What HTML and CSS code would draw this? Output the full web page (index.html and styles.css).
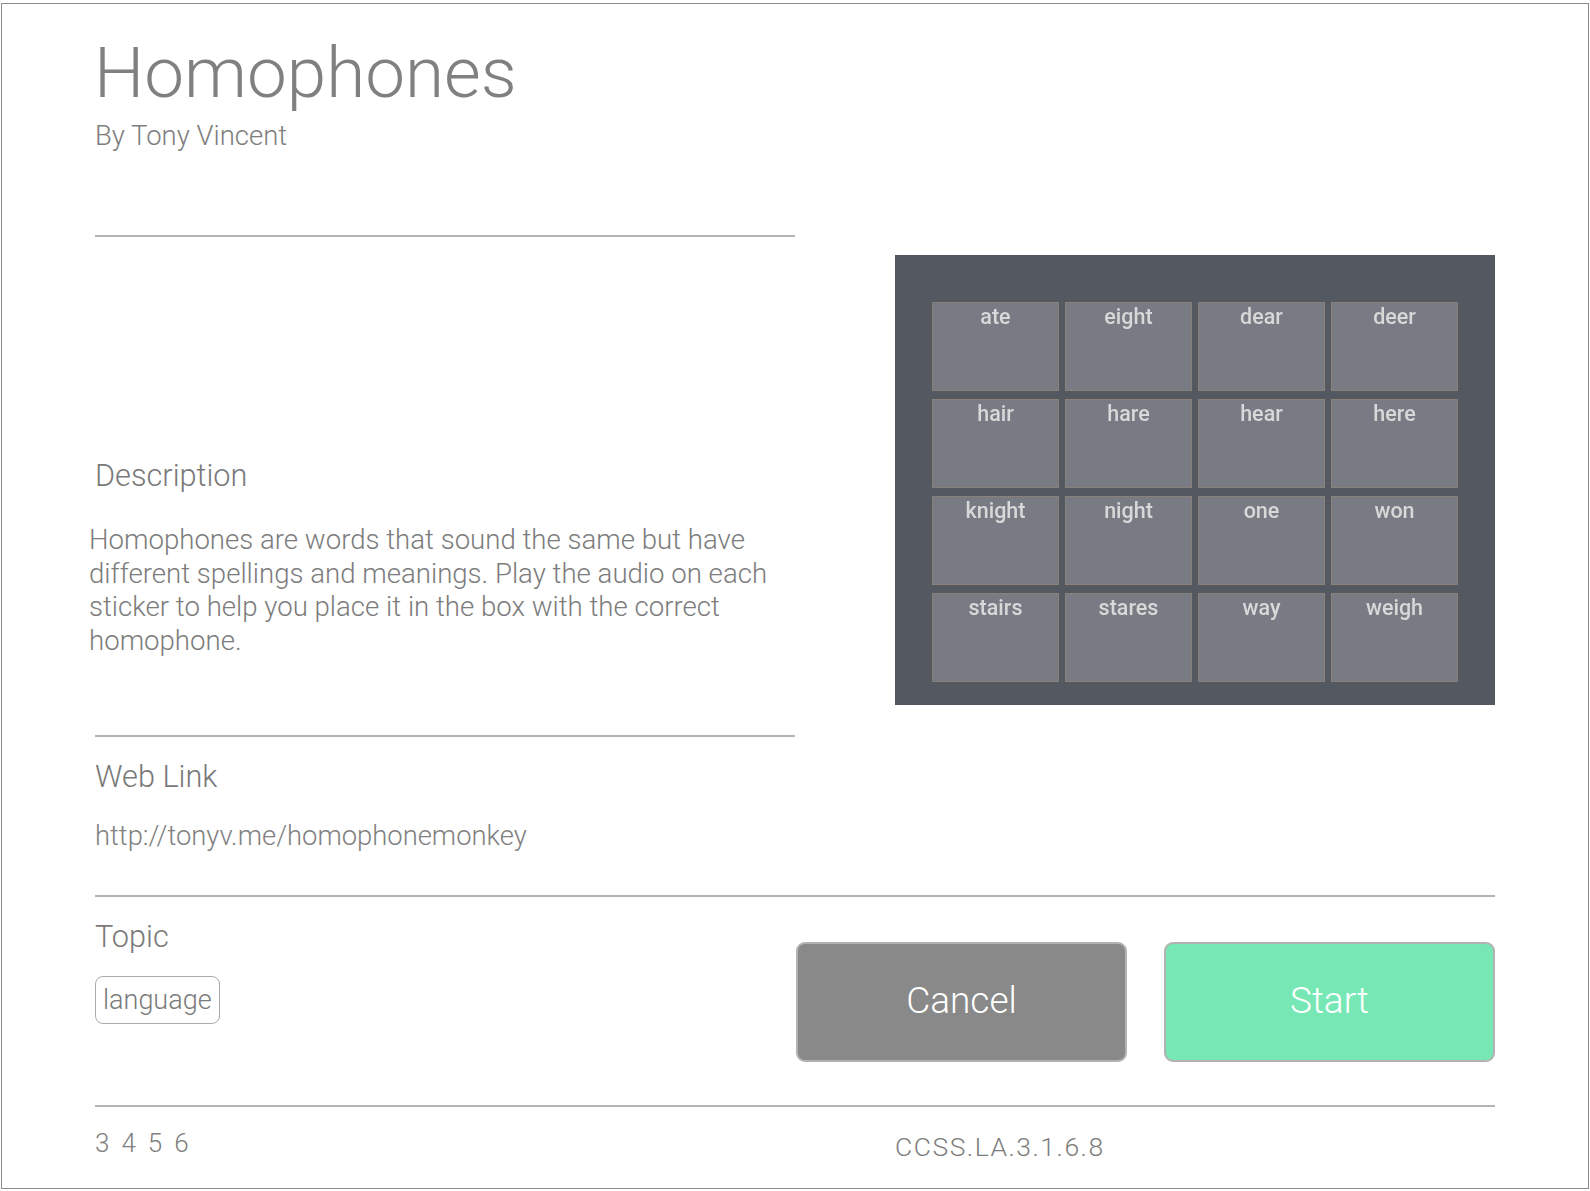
FILE: index.html
```html
<!DOCTYPE html>
<html lang="en">
<head>
<meta charset="utf-8">
<title>Homophones</title>
<link rel="stylesheet" href="styles.css">
</head>
<body>
<div class="frame">
  <header class="header">
    <h1 class="title">Homophones</h1>
    <p class="author">By Tony Vincent</p>
  </header>

  <section class="main">
    <div class="info">
      <hr class="rule">
      <h2 class="label label-desc">Description</h2>
      <p class="desc">Homophones are words that sound the same but have different spellings and meanings. Play the audio on each sticker to help you place it in the box with the correct homophone.</p>
      <hr class="rule rule-mid">
      <h2 class="label label-link">Web Link</h2>
      <p class="link">http://tonyv.me/homophonemonkey</p>
    </div>
    <div class="preview">
      <div class="board">
        <div class="tile"><span>ate</span></div>
        <div class="tile"><span>eight</span></div>
        <div class="tile"><span>dear</span></div>
        <div class="tile"><span>deer</span></div>
        <div class="tile"><span>hair</span></div>
        <div class="tile"><span>hare</span></div>
        <div class="tile"><span>hear</span></div>
        <div class="tile"><span>here</span></div>
        <div class="tile"><span>knight</span></div>
        <div class="tile"><span>night</span></div>
        <div class="tile"><span>one</span></div>
        <div class="tile"><span>won</span></div>
        <div class="tile"><span>stairs</span></div>
        <div class="tile"><span>stares</span></div>
        <div class="tile"><span>way</span></div>
        <div class="tile"><span>weigh</span></div>
      </div>
    </div>
  </section>

  <hr class="rule rule-wide">

  <section class="actions">
    <div class="topic">
      <h2 class="label label-topic">Topic</h2>
      <span class="tag">language</span>
    </div>
    <div class="buttons">
      <button class="btn btn-cancel" type="button">Cancel</button>
      <button class="btn btn-start" type="button">Start</button>
    </div>
  </section>

  <hr class="rule rule-wide rule-foot">

  <footer class="footer">
    <div class="grades"><span>3</span><span>4</span><span>5</span><span>6</span></div>
    <div class="standard">CCSS.LA.3.1.6.8</div>
  </footer>
</div>
</body>
</html>
```

FILE: styles.css
```css
* {
  box-sizing: border-box;
}

html,
body {
  margin: 0;
  padding: 0;
  background: #ffffff;
}

body {
  font-family: Roboto, "Liberation Sans", Arial, sans-serif;
  font-weight: 300;
  color: #7c7c7c;
}

.frame {
  margin: 3px 0 0 1px;
  width: 1588px;
  height: 1186px;
  border: 1px solid #8a8a8a;
  padding: 29px 0 0 93px;
}

/* header */
.title {
  margin: 0 0 0 -1px;
  font-size: 71px;
  line-height: 80px;
  font-weight: 300;
  color: #808080;
}

.author {
  margin: 7px 0 0;
  font-size: 27.5px;
  line-height: 32px;
  color: #7e7e7e;
}

/* rules */
.rule {
  display: block;
  border: 0;
  margin: 0;
  height: 2px;
  background: #b4b4b4;
}

.rule-mid {
  margin-top: 78px;
}

.rule-wide {
  width: 1400px;
  margin-top: 42px;
}

.rule-foot {
  margin-top: 43px;
}

/* main area */
.main {
  display: grid;
  grid-template-columns: 700px 600px;
  column-gap: 100px;
  align-items: start;
  margin-top: 83px;
}

.label {
  margin: 0;
  font-size: 30.7px;
  line-height: 36px;
  font-weight: 300;
  color: #797979;
}

.label-desc {
  margin-top: 221px;
}

.desc {
  margin: 29px 0 0 -6px;
  width: 712px;
  font-size: 27.6px;
  line-height: 33.5px;
  color: #7c7c7c;
}

.label-link {
  margin-top: 22px;
}

.link {
  margin: 24px 0 0;
  font-size: 27.4px;
  line-height: 34px;
  color: #818181;
}

/* preview board */
.board {
  margin-top: 20px;
  width: 600px;
  height: 450px;
  background: #535861;
  padding: 47px 37px 0;
  display: grid;
  grid-template-columns: repeat(4, 127px);
  grid-template-rows: repeat(4, 89px);
  column-gap: 6px;
  row-gap: 8px;
}

.tile {
  background: #787b83;
  border: 1px dotted #97896a;
  display: flex;
  justify-content: center;
  align-items: flex-start;
  padding-top: 2px;
  filter: blur(0.55px);
}

.tile span {
  font-family: Roboto, "Liberation Sans", Arial, sans-serif;
  font-weight: 500;
  font-size: 21.5px;
  line-height: 24px;
  color: #d8d8d8;
}

/* actions */
.actions {
  display: grid;
  grid-template-columns: 700px 700px;
  align-items: start;
}

.topic {
  display: flex;
  flex-direction: column;
  align-items: flex-start;
}

.label-topic {
  margin-top: 22px;
}

.tag {
  margin: 21px 0 0;
  height: 48px;
  padding: 0 7px;
  display: inline-flex;
  align-items: center;
  border: 1.5px solid #ababab;
  border-radius: 8px;
  font-size: 27px;
  line-height: 40px;
  color: #7a7a7a;
}

.buttons {
  display: flex;
  gap: 37px;
  margin-top: 45px;
  padding-left: 1px;
}

.btn {
  width: 331px;
  height: 120px;
  border: 2px solid #b2b2b2;
  border-radius: 9px;
  font-family: Roboto, "Liberation Sans", Arial, sans-serif;
  font-weight: 300;
  font-size: 37px;
  color: #ffffff;
  padding: 0 0 3px;
  cursor: pointer;
}

.btn-cancel {
  background: #898989;
}

.btn-start {
  background: #77e8b5;
}

/* footer */
.footer {
  display: grid;
  grid-template-columns: 700px 600px;
  column-gap: 100px;
}

.grades {
  display: flex;
  gap: 12px;
  margin-top: 20px;
  font-size: 26px;
  line-height: 32px;
  color: #808080;
}

.standard {
  margin-top: 24px;
  font-size: 26.5px;
  line-height: 32px;
  letter-spacing: 1.5px;
  color: #7d7d7d;
}
```
